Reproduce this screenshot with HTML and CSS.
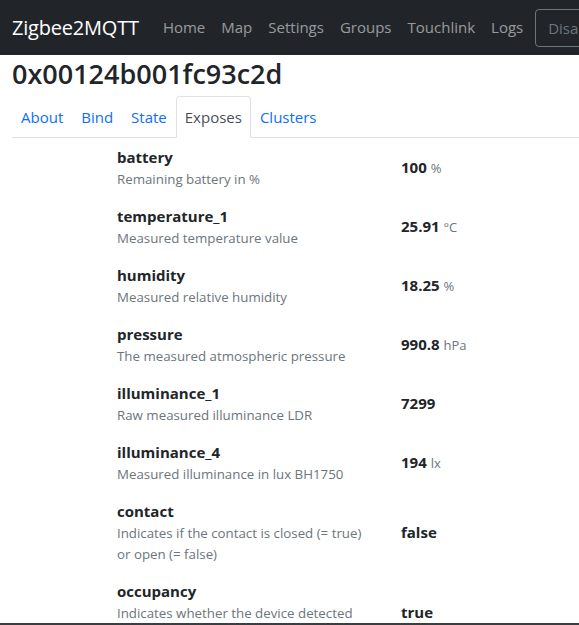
FILE: index.html
```html
<!DOCTYPE html>
<html>
<head>
<meta charset="utf-8">
<link rel="stylesheet" href="styles.css">
</head>
<body>
<nav class="navbar">
  <span class="brand">Zigbee2MQTT</span>
  <a class="nav-link">Home</a>
  <a class="nav-link">Map</a>
  <a class="nav-link">Settings</a>
  <a class="nav-link">Groups</a>
  <a class="nav-link">Touchlink</a>
  <a class="nav-link">Logs</a>
  <button class="join-btn">Disable join (All)</button>
</nav>
<main class="container">
  <h3 class="title">0x00124b001fc93c2d</h3>
  <ul class="tabs">
    <li class="tab">About</li>
    <li class="tab">Bind</li>
    <li class="tab">State</li>
    <li class="tab active">Exposes</li>
    <li class="tab">Clusters</li>
  </ul>
  <div class="exposes">
    <div class="row">
      <div class="info"><div class="name">battery</div><div class="desc">Remaining battery in %</div></div>
      <div class="value"><b>100</b> <span class="unit">%</span></div>
    </div>
    <div class="row">
      <div class="info"><div class="name">temperature_1</div><div class="desc">Measured temperature value</div></div>
      <div class="value"><b>25.91</b> <span class="unit">°C</span></div>
    </div>
    <div class="row">
      <div class="info"><div class="name">humidity</div><div class="desc">Measured relative humidity</div></div>
      <div class="value"><b>18.25</b> <span class="unit">%</span></div>
    </div>
    <div class="row">
      <div class="info"><div class="name">pressure</div><div class="desc">The measured atmospheric pressure</div></div>
      <div class="value"><b>990.8</b> <span class="unit">hPa</span></div>
    </div>
    <div class="row">
      <div class="info"><div class="name">illuminance_1</div><div class="desc">Raw measured illuminance LDR</div></div>
      <div class="value"><b>7299</b></div>
    </div>
    <div class="row">
      <div class="info"><div class="name">illuminance_4</div><div class="desc">Measured illuminance in lux BH1750</div></div>
      <div class="value"><b>194</b> <span class="unit">lx</span></div>
    </div>
    <div class="row">
      <div class="info"><div class="name">contact</div><div class="desc">Indicates if the contact is closed (= true) or open (= false)</div></div>
      <div class="value"><b>false</b></div>
    </div>
    <div class="row">
      <div class="info"><div class="name">occupancy</div><div class="desc">Indicates whether the device detected occupancy</div></div>
      <div class="value"><b>true</b></div>
    </div>
  </div>
</main>
<div class="bottom-edge"></div>
</body>
</html>
```
FILE: styles.css
```css
html, body {
  margin: 0;
  padding: 0;
  overflow: hidden;
  height: 625px;
}
body {
  font-family: "Open Sans", "Noto Sans", sans-serif;
  color: #212529;
  background: #fff;
  font-size: 16px;
  line-height: 1.5;
}
.navbar {
  display: flex;
  align-items: center;
  height: 55px;
  background: #212529;
  padding: 0 12px;
  white-space: nowrap;
  overflow: hidden;
}
.brand {
  color: #fff;
  font-size: 20px;
  margin-right: 16px;
  letter-spacing: -0.2px;
}
.nav-link {
  color: rgba(255, 255, 255, 0.55);
  padding: 0 8px;
  font-size: 15px;
}
.join-btn {
  margin-left: 4px;
  height: 38px;
  padding: 0 12px;
  background: transparent;
  border: 1px solid #6c757d;
  border-radius: 4px;
  color: #6c757d;
  font-family: inherit;
  font-size: 15px;
  white-space: nowrap;
  flex-shrink: 0;
}
.container {
  padding: 0 12px;
}
.title {
  margin: 0;
  font-size: 27px;
  font-weight: 600;
  line-height: 38px;
}
.tabs {
  display: flex;
  list-style: none;
  margin: 3px -12px 0 0;
  padding: 0;
  border-bottom: 1px solid #dee2e6;
}
.tab {
  padding: 8px 8px;
  color: #0d6efd;
  font-size: 15px;
  border: 1px solid transparent;
  border-top-left-radius: 4px;
  border-top-right-radius: 4px;
  margin-bottom: -1px;
  line-height: 24px;
}
.tab.active {
  color: #495057;
  background: #fff;
  border-color: #dee2e6 #dee2e6 #fff;
}
.exposes {
  padding: 0 0 0 105px;
}
.row {
  display: flex;
  align-items: center;
  padding: 7px 0;
}
.info {
  width: 284px;
  padding-right: 30px;
  box-sizing: border-box;
}
.name {
  font-weight: 700;
  font-size: 15px;
  line-height: 24px;
}
.desc {
  font-size: 13.3px;
  line-height: 21px;
  color: #6c757d;
}
.value {
  font-size: 15px;
}
.value b {
  font-weight: 700;
}
.unit {
  color: #6c757d;
  font-size: 13px;
}
.bottom-edge {
  position: fixed;
  left: 0;
  right: 0;
  bottom: 0;
  height: 2px;
  background: #3a3d41;
}
```
